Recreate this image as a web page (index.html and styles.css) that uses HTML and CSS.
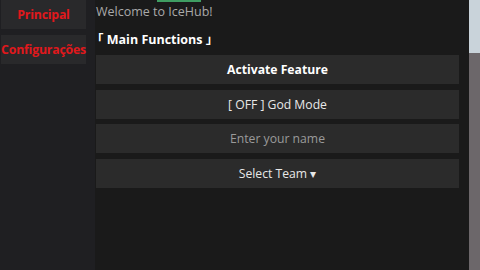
FILE: index.html
```html
<!DOCTYPE html>
<html>
<head>
<meta charset="utf-8">
<link rel="stylesheet" href="styles.css">
</head>
<body>
<div class="screen">
  <aside class="sidebar">
    <div class="tab">Principal</div>
    <div class="tab">Configurações</div>
  </aside>
  <main class="panel">
    <div class="topbar"></div>
    <div class="welcome">Welcome to IceHub!</div>
    <div class="section"><span class="br-open">「</span> Main Functions <span class="br-close">」</span></div>
    <div class="buttons">
      <div class="btn btn-bold">Activate Feature</div>
      <div class="btn">[ OFF ] God Mode</div>
      <div class="btn btn-input">Enter your name</div>
      <div class="btn">Select Team ▾</div>
    </div>
  </main>
  <div class="backdrop">
    <div class="sky"></div>
    <div class="ground"></div>
  </div>
</div>
</body>
</html>
```

FILE: styles.css
```css
html, body {
  margin: 0;
  padding: 0;
  width: 480px;
  height: 270px;
  overflow: hidden;
  background: #1a1a1a;
}
.screen {
  display: flex;
  width: 480px;
  height: 270px;
  font-family: "Open Sans", "Liberation Sans", "Noto Sans CJK JP", sans-serif;
}
.sidebar {
  width: 95px;
  flex: none;
  background: #1f1f22;
  display: flex;
  flex-direction: column;
  gap: 6px;
  padding-left: 1px;
  box-sizing: border-box;
}
.tab {
  width: 85px;
  height: 29px;
  background: #29292b;
  color: #e0181c;
  font-weight: 700;
  font-size: 12.3px;
  display: flex;
  align-items: center;
  justify-content: center;
  white-space: nowrap;
  letter-spacing: -0.2px;
}
.panel {
  position: relative;
  width: 374px;
  flex: none;
  background: #1a1a1a;
  padding: 0 10px 0 1px;
  box-sizing: border-box;
}
.topbar {
  position: absolute;
  left: 62px;
  top: 0;
  width: 44px;
  height: 2px;
  background: #3f9d62;
}
.welcome {
  color: #a9a9a9;
  font-size: 12.5px;
  height: 24px;
  line-height: 24px;
}
.section {
  color: #ffffff;
  font-weight: 700;
  font-size: 12.5px;
  height: 31px;
  line-height: 32px;
  white-space: nowrap;
}
.br-open {
  display: inline-block;
  margin-left: -5px;
}
.buttons {
  display: flex;
  flex-direction: column;
  gap: 5.5px;
}
.btn {
  height: 29px;
  background: #2b2b2b;
  color: #e8e8e8;
  font-size: 12.2px;
  display: flex;
  align-items: center;
  justify-content: center;
}
.btn-bold {
  font-weight: 700;
  color: #ffffff;
}
.btn-input {
  color: #9a9a9a;
}
.backdrop {
  flex: 1;
  display: flex;
  flex-direction: column;
}
.sky {
  height: 53px;
  background: #c9d3da;
}
.ground {
  flex: 1;
  background: #6c676a;
}
```
